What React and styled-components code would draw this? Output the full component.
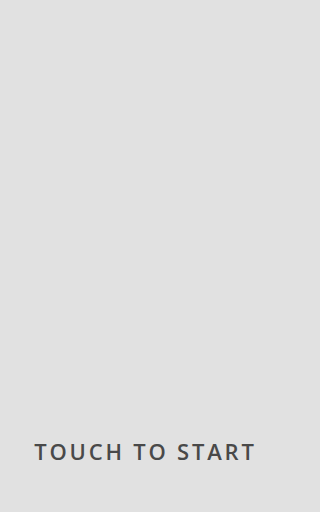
import styled, { createGlobalStyle } from "styled-components";

const GlobalStyle = createGlobalStyle`
  html, body {
    margin: 0;
    padding: 0;
    background: #e1e1e1;
  }
`;

const Screen = styled.div`
  width: 288px;
  height: 512px;
  background: #e1e1e1;
  display: flex;
  flex-direction: column;
  justify-content: flex-end;
  align-items: center;
  padding-bottom: 46px;
  box-sizing: border-box;
`;

const StartLabel = styled.div`
  font-family: "Open Sans", "Liberation Sans", sans-serif;
  font-size: 22px;
  font-weight: 600;
  line-height: 30px;
  letter-spacing: 2.8px;
  margin-right: -2.8px;
  color: #494949;
  text-transform: uppercase;
  white-space: nowrap;
`;

const App = () => (
  <>
    <GlobalStyle />
    <Screen>
      <StartLabel>Touch to start</StartLabel>
    </Screen>
  </>
);

export default App;
